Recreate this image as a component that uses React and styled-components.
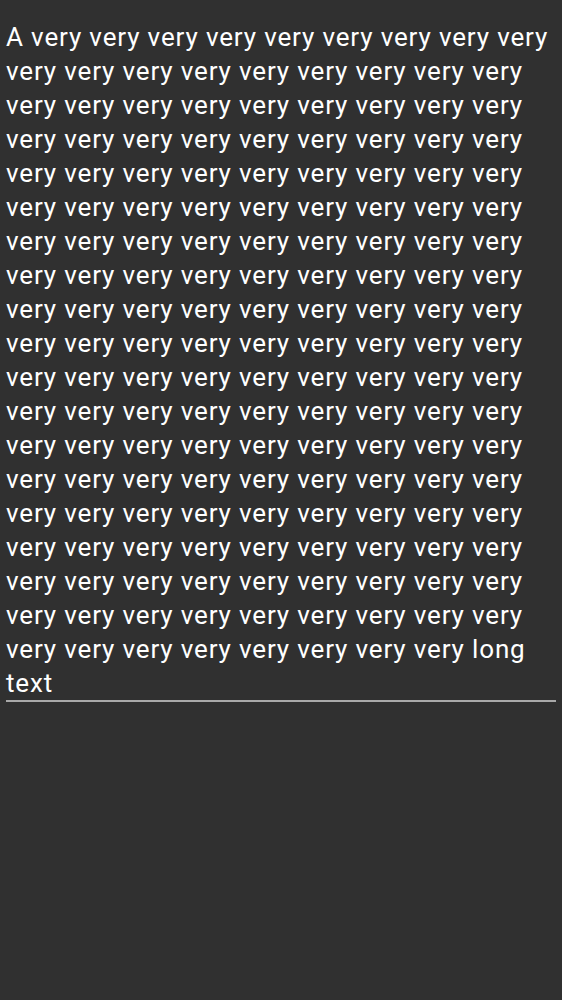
import React from "react";
import styled, { createGlobalStyle } from "styled-components";

const Global = createGlobalStyle`
  html, body { margin: 0; padding: 0; background: #303030; }
  body { font-family: Roboto, "Noto Sans", sans-serif; }
`;

const Page = styled.div`
  min-height: 1000px;
  background: #303030;
  padding: 20px 6px 0;
  box-sizing: border-box;
`;

const Field = styled.div`
  color: #ffffff;
  font-family: Roboto, sans-serif;
  font-size: 26px;
  line-height: 34px;
  letter-spacing: 0.85px;
  border-bottom: 2px solid #a9a9a9;
  overflow-wrap: break-word;
`;

const text = "A " + Array(170).fill("very").join(" ") + " long text";

export default function App() {
  return (
    <>
      <Global />
      <Page>
        <Field>{text}</Field>
      </Page>
    </>
  );
}
